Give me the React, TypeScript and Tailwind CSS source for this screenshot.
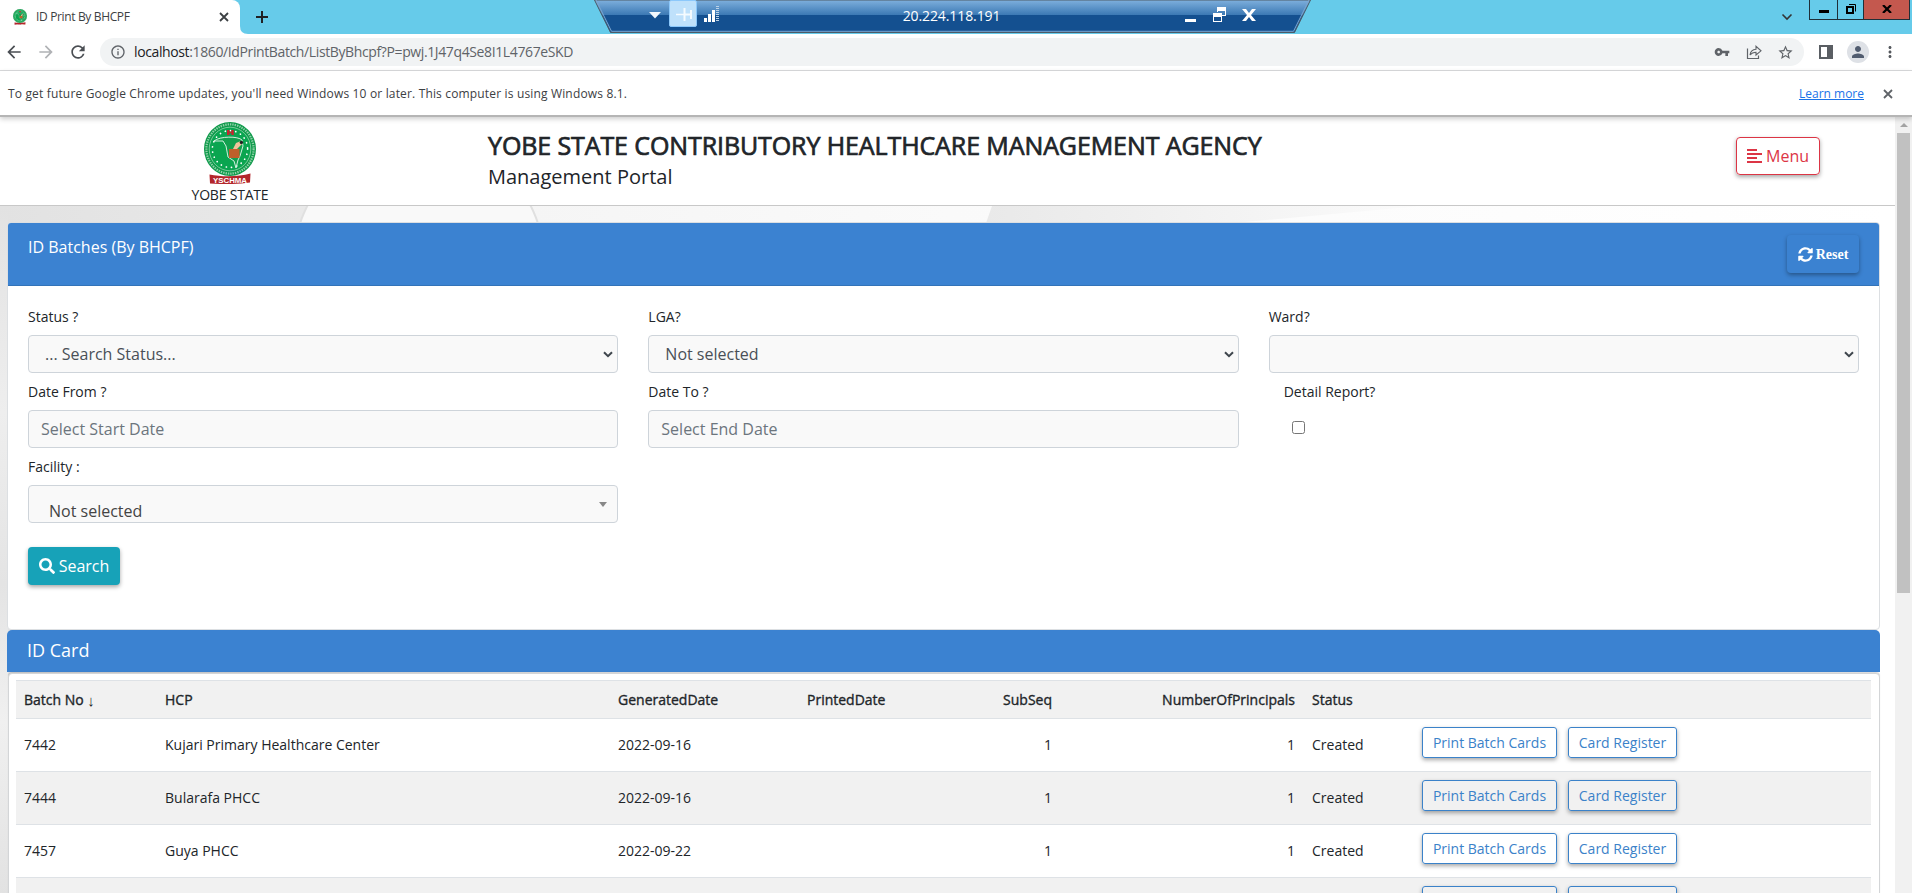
import type { ReactNode } from "react";
import { FaSearch, FaSyncAlt } from "react-icons/fa";
import { MdArrowBack, MdArrowForward, MdRefresh, MdInfoOutline, MdVpnKey, MdStarBorder, MdMoreVert, MdPerson } from "react-icons/md";

function Crest({ className }: { className?: string }) {
  return (
    <svg viewBox="0 0 52 62" preserveAspectRatio="none" className={className}>
      <ellipse cx="26" cy="27" rx="26" ry="27" fill="#0f9a4b" />
      <ellipse cx="26" cy="27" rx="23.6" ry="24.6" fill="none" stroke="#8fd1a8" strokeWidth="2.2" strokeDasharray="1.4 1" />
      <ellipse cx="26" cy="27" rx="20.8" ry="21.8" fill="#0aa550" stroke="#a5dcb9" strokeWidth="0.7" />
      <ellipse cx="26" cy="27" rx="17.6" ry="18.4" fill="none" stroke="#fff" strokeWidth="1.7" strokeLinecap="round" strokeDasharray="0.1 5.2" />
      <path d="M10 19 C16 14 34 14 38 18 L39 24 L36 34 L34 38 L32 46 L30 39 L24 35 L22 24 L19 19 Z" fill="#12a04f" stroke="#e8f7ee" strokeWidth="0.9" />
      <path d="M23 8h2.4v5H23zM27.4 8h2.4v5h-2.4zM25 9.7h3v1.6h-3z" fill="#c4262e" />
      <path d="M29 27 L32 21 L37 19 L38 22 L33 27 Z" fill="#f0c39b" />
      <circle cx="37.4" cy="20.4" r="1.7" fill="#222" />
      <rect x="25" y="27" width="10.5" height="9" fill="#c0602b" />
      <path d="M5.5 52.5 C18 55 34 55 46.5 51.5 L46 60.5 C34 62.4 18 62.4 6 61.5 Z" fill="#b3262b" />
      <text x="26" y="60.6" textAnchor="middle" fontFamily="Liberation Sans, sans-serif" fontWeight="700" fontSize="7.6" fill="#fff" textLength="34" lengthAdjust="spacingAndGlyphs">YSCHMA</text>
    </svg>
  );
}

function Cross({ className }: { className: string }) {
  return (
    <svg viewBox="0 0 10 10" className={className}>
      <path d="M1 1 L9 9 M9 1 L1 9" stroke="currentColor" strokeWidth="1.8" />
    </svg>
  );
}

function RemoteBar() {
  return (
    <div className="absolute left-[594px] top-0 h-[34px] w-[717px]">
      <svg viewBox="0 0 717 34" className="absolute inset-0 h-full w-full">
        <defs>
          <linearGradient id="rdp" x1="0" y1="0" x2="0" y2="1">
            <stop offset="0" stopColor="#7fb0dd" />
            <stop offset="0.45" stopColor="#3d7ab5" />
            <stop offset="0.46" stopColor="#145090" />
            <stop offset="1" stopColor="#145090" />
          </linearGradient>
        </defs>
        <path d="M0.5 0 L16.5 32.5 H700.5 L716.5 0 Z" fill="url(#rdp)" stroke="#4d5a66" />
        <path d="M2 0 L17.5 31.3 H699.5 L715 0" fill="none" stroke="#7da7d0" />
        <path d="M55 12 h12 l-6 6.5 z" fill="#f2f8fd" />
        <rect x="75.5" y="0.5" width="27" height="26" rx="1.5" fill="#bfe1fb" stroke="#8cc8fb" />
        <path d="M82 14.5 h8" stroke="#f5fbff" strokeWidth="1.5" fill="none" />
        <path d="M90.5 8 v13 M90.5 14.5 h7 M97 10 v9" stroke="#f5fbff" strokeWidth="2" fill="none" />
        <path d="M110 18h3v4h-3zM114 14h3v8h-3zM118 10h3v12h-3z" fill="#fff" />
        <path d="M123.5 6 v16" stroke="#bcd3e8" strokeWidth="3" strokeDasharray="1 1" />
        <path d="M591 19 h11 v3 h-11z" fill="#fff" />
        <path d="M623 7 h9 v9 h-4 v-1 h3 v-4 h-7 v1 h-1z M619 13 h9 v9 h-9z M620 17 v4 h7 v-4z" fill="#fff" fillRule="evenodd" />
        <path d="M648 9 h4 l3 4 l3 -4 h4 l-5 6 l5 6 h-4 l-3 -4 l-3 4 h-4 l5 -6z" fill="#fff" />
      </svg>
      <span className="absolute left-0 top-0 w-full pr-[2px] text-center text-[14px] leading-[32px] tracking-[-0.1px] text-white">20.224.118.191</span>
    </div>
  );
}

function TabStrip() {
  return (
    <div className="relative flex h-[34px] bg-[#66cbea]">
      <div className="flex h-full w-[240px] items-center rounded-tr-lg bg-white pr-[11px] pl-[13px]">
        <Crest className="h-4 w-3.5" />
        <span className="ml-[9px] flex-1 text-[12px] leading-4 tracking-[-0.35px] whitespace-nowrap text-[#3c4043]">ID Print By BHCPF</span>
        <Cross className="size-[10px] text-[#3c4043]" />
      </div>
      <svg viewBox="0 0 8 8" className="size-2 self-end">
        <path d="M0 0 Q0 8 8 8 H0Z" fill="#fff" />
      </svg>
      <svg viewBox="0 0 14 14" className="mt-[10px] ml-[7px] size-3.5">
        <path d="M7 1v12M1 7h12" stroke="#202124" strokeWidth="2" />
      </svg>
      <RemoteBar />
      <div className="ml-auto flex items-start">
        <svg viewBox="0 0 12 8" className="mt-[13px] mr-[16px] h-2 w-3">
          <path d="M1.5 1.5 L6 6 L10.5 1.5" stroke="#333" strokeWidth="1.6" fill="none" />
        </svg>
        <div className="mr-0.5 flex h-5 border border-t-0 border-[#1f2f38]">
          <div className="flex w-[28px] justify-center border-r border-[#1f2f38] pt-[10px]">
            <span className="h-[3px] w-[10px] bg-black" />
          </div>
          <div className="flex w-[26px] justify-center border-r border-[#1f2f38] pt-1">
            <svg viewBox="0 0 10 10" className="size-2.5">
              <path d="M3 0.5 H9.5 V7.5" stroke="#000" fill="none" />
              <rect x="1" y="3" width="6" height="6" fill="none" stroke="#000" strokeWidth="2" />
            </svg>
          </div>
          <div className="flex w-[45px] justify-center bg-[#c4584e] pt-[5px]">
            <svg viewBox="0 0 10 8" className="h-2 w-2.5">
              <path d="M1 0 L9 8 M9 0 L1 8" stroke="#000" strokeWidth="2.2" />
            </svg>
          </div>
        </div>
      </div>
    </div>
  );
}

function Toolbar() {
  return (
    <div className="flex h-[37px] items-center border-b border-[#dadbdd] bg-white pl-[4px]">
      <MdArrowBack className="size-5 text-[#4a4e53]" />
      <MdArrowForward className="ml-[12px] size-5 text-[#b0b2b5]" />
      <MdRefresh className="ml-[12px] size-5 text-[#4a4e53]" />
      <div className="ml-[12px] flex h-7 w-[1704px] items-center rounded-full bg-[#f1f3f4] pr-[10px] pl-[10px]">
        <MdInfoOutline className="size-4 text-[#5f6368]" />
        <span className="ml-2 flex-1 text-[14px] leading-5 tracking-[-0.38px] text-[#5f6368]">
          <span className="text-[#202124]">localhost</span>:1860/IdPrintBatch/ListByBhcpf?P=pwj.1J47q4Se8I1L4767eSKD
        </span>
        <MdVpnKey className="size-4 text-[#5f6368]" />
        <svg viewBox="0 0 16 16" className="ml-4 size-4">
          <path d="M1.5 4.5 V14.5 H12.5 V11.5" stroke="#5f6368" strokeWidth="1.2" fill="none" />
          <path d="M4 11 C4.5 7.5 7 5.5 10 5.3 V2.3 L15 6.8 L10 11 V8.2 C7.5 8.2 5.5 9 4 11 Z" stroke="#5f6368" strokeWidth="1.1" fill="none" />
        </svg>
        <MdStarBorder className="ml-[15px] size-[17px] text-[#5f6368]" />
      </div>
      <svg viewBox="0 0 14 14" className="ml-[15px] size-3.5">
        <path d="M0 0h14v14H0z M2 2v10h6V2z" fill="#5a5e63" fillRule="evenodd" />
      </svg>
      <div className="ml-[14px] flex size-[22px] items-center justify-center rounded-full bg-[#dee1e6]">
        <MdPerson className="size-[18px] text-[#515c6f]" />
      </div>
      <MdMoreVert className="ml-[12px] size-[18px] text-[#54585d]" />
    </div>
  );
}

function InfoBar() {
  return (
    <div className="relative z-10 flex h-[46px] items-center border-b-2 border-[#b5b5b5] bg-white pt-px pr-[19px] pl-2 text-[12px] leading-4 shadow-[0_2px_5px_rgba(0,0,0,0.2)]">
      <span className="flex-1 tracking-[0.16px] text-[#3c4043]">
        To get future Google Chrome updates, you'll need Windows 10 or later. This computer is using Windows 8.1.
      </span>
      <span className="mr-[19px] text-[#1a73e8] underline">Learn more</span>
      <Cross className="size-[10px] text-[#5f6368]" />
    </div>
  );
}

function SiteHeader() {
  return (
    <header className="flex h-[89px] items-start border-b border-[#c8c8c8] bg-white">
      <div className="flex w-[460px] flex-col items-center pt-[5px]">
        <Crest className="h-[62px] w-[52px]" />
        <span className="text-[14px] leading-[21px] tracking-[-0.2px]">YOBE STATE</span>
      </div>
      <div className="pt-[10px] pl-7">
        <h1 className="text-[25px] leading-9 font-normal tracking-[-0.1px] whitespace-nowrap [-webkit-text-stroke:0.7px_#212529]">YOBE STATE CONTRIBUTORY HEALTHCARE MANAGEMENT AGENCY</h1>
        <p className="text-[20px] leading-7">Management Portal</p>
      </div>
      <button className="mt-5 mr-[75px] ml-auto flex h-[38px] w-[84px] items-center justify-center gap-1 rounded border border-[#dc3545] text-[16px] text-[#dc3545] shadow-[0_2px_4px_rgba(0,0,0,0.35)]">
        <svg viewBox="0 0 15 14" className="h-3.5 w-[15px]">
          <path d="M0 0h10v2H0zM0 4h15v2H0zM0 8h10v2H0zM0 12h15v2H0z" fill="#dc3545" />
        </svg>
        Menu
      </button>
    </header>
  );
}

function Field({ label, children }: { label: string; children: ReactNode }) {
  return (
    <div className="h-[75px]">
      <div className="pt-px pb-2 text-[14px] leading-[21px]">{label}</div>
      {children}
    </div>
  );
}

function SelectBox({ value }: { value: string }) {
  return (
    <div className="flex h-[38px] items-center justify-between rounded border border-[#ced4da] bg-[#f9f9f9] pr-1 pl-4 text-[16px] text-[#495057]">
      <span>{value}</span>
      <svg viewBox="0 0 10 7" className="h-[7px] w-2.5">
        <path d="M1 1.2 L5 5.2 L9 1.2" stroke="#3f464d" strokeWidth="2" fill="none" />
      </svg>
    </div>
  );
}

function InputBox({ placeholder }: { placeholder: string }) {
  return <div className="flex h-[38px] items-center rounded border border-[#ced4da] bg-[#f9f9f9] px-3 text-[16px] text-[#6c757d]">{placeholder}</div>;
}

function FilterCard() {
  return (
    <section className="mr-[15px] ml-[7px] h-[408px] rounded border border-[#dcdfe2] bg-white">
      <div className="flex h-[63px] items-start justify-between rounded-t-[3px] border-b border-[#3373b8] bg-[#3b82d1] pr-5 pl-5 text-white">
        <span className="pt-3 text-[16px] leading-6">ID Batches (By BHCPF)</span>
        <button className="mt-[12px] flex h-[38px] w-[72px] items-center justify-center gap-[3px] rounded pt-px font-['Liberation_Serif',serif] text-[14px] font-bold shadow-[0_2px_4px_rgba(0,0,0,0.35)]">
          <FaSyncAlt className="size-[15px]" />
          Reset
        </button>
      </div>
      <div className="grid grid-cols-3 gap-x-[30px] pt-[19px] pr-5 pl-5">
        <Field label="Status ?">
          <SelectBox value="... Search Status..." />
        </Field>
        <Field label="LGA?">
          <SelectBox value="Not selected" />
        </Field>
        <Field label="Ward?">
          <SelectBox value="" />
        </Field>
        <Field label="Date From ?">
          <InputBox placeholder="Select Start Date" />
        </Field>
        <Field label="Date To ?">
          <InputBox placeholder="Select End Date" />
        </Field>
        <div className="pl-[15px]">
          <Field label="Detail Report?">
            <div className="mt-[11px] ml-2 size-[13px] rounded-[2.5px] border border-[#767676] bg-white" />
          </Field>
        </div>
        <Field label="Facility :">
          <div className="flex h-[38px] justify-between overflow-hidden rounded border border-[#ced4da] bg-[#f9f9f9] pr-[10px] pl-5 text-[16px] text-[#444]">
            <span className="pt-[13px] leading-6">Not selected</span>
            <svg viewBox="0 0 8 5" className="mt-4 h-[5px] w-2">
              <path d="M0 0h8L4 5z" fill="#888" />
            </svg>
          </div>
        </Field>
      </div>
      <button className="mt-[17px] ml-5 flex h-[38px] w-[92px] items-center justify-center gap-[4px] rounded bg-[#17a2b8] text-[16px] text-white shadow-[0_2px_4px_rgba(0,0,0,0.35)]">
        <FaSearch className="size-4" />
        Search
      </button>
    </section>
  );
}

const rows = [
  { no: "7442", hcp: "Kujari Primary Healthcare Center", date: "2022-09-16" },
  { no: "7444", hcp: "Bularafa PHCC", date: "2022-09-16" },
  { no: "7457", hcp: "Guya PHCC", date: "2022-09-22" },
  { no: "", hcp: "", date: "" },
];

const columns = "grid grid-cols-[141px_453px_189px_174px_71px_243px_118px_1fr] pl-2";

function RowButton({ width, children }: { width: string; children: ReactNode }) {
  return (
    <button className={`${width} h-[31px] rounded-[3px] border border-[#3b82c9] text-[14px] leading-[21px] whitespace-nowrap text-[#3b82c9] shadow-[0_2px_4px_rgba(0,0,0,0.35)]`}>
      {children}
    </button>
  );
}

function ResultCard() {
  return (
    <section className="mr-[15px]">
      <div className="ml-[7px] h-[42px] rounded-t-[5px] bg-[#3b82d1] pl-5 text-[18px] leading-[41px] text-white">ID Card</div>
      <div className="mt-px ml-2 h-[300px] rounded-t border border-[#d3d5d7] bg-white pt-[6px] pr-2 pl-[7px] text-[14px] shadow-[0_-1px_1px_rgba(0,0,0,0.15)]">
        <div className={`${columns} h-[38px] border-t border-[#dee2e6] bg-[#f1f1f1] leading-[38px] [-webkit-text-stroke:0.35px_#212529]`}>
          <span>
            Batch No <span className="inline-block h-[38px] translate-y-px align-top font-['Liberation_Sans',sans-serif] text-[15px] [-webkit-text-stroke:0]">↓</span>
          </span>
          <span>HCP</span>
          <span>GeneratedDate</span>
          <span>PrintedDate</span>
          <span className="text-right">SubSeq</span>
          <span className="text-right">NumberOfPrincipals</span>
          <span className="pl-[17px]">Status</span>
        </div>
        {rows.map((r, i) => (
          <div key={i} className={`${columns} h-[53px] border-t border-[#dee2e6] leading-[51px] ${i % 2 ? "bg-[#f1f1f1]" : "bg-white"}`}>
            <span>{r.no}</span>
            <span>{r.hcp}</span>
            <span>{r.date}</span>
            <span />
            <span className="text-right">{r.no && "1"}</span>
            <span className="text-right">{r.no && "1"}</span>
            <span className="pl-[17px]">{r.no && "Created"}</span>
            <div className="flex items-start gap-[11px] pt-2 pl-[9px]">
              <RowButton width="w-[135px]">{r.no && "Print Batch Cards"}</RowButton>
              <RowButton width="w-[109px]">{r.no && "Card Register"}</RowButton>
            </div>
          </div>
        ))}
      </div>
    </section>
  );
}

function Backdrop() {
  return (
    <svg viewBox="0 0 1895 688" className="absolute top-[89px] left-0 h-[688px] w-[1895px]">
      <defs>
        <linearGradient id="wall" x1="0" x2="1" y1="0" y2="0">
          <stop offset="0" stopColor="#e2e2e2" />
          <stop offset="0.16" stopColor="#e9e9e9" />
          <stop offset="0.2" stopColor="#eeeeee" />
          <stop offset="0.28" stopColor="#f5f5f5" />
          <stop offset="0.5" stopColor="#fafafa" />
          <stop offset="1" stopColor="#ffffff" />
        </linearGradient>
        <linearGradient id="beam" x1="0" x2="1" y1="0" y2="0">
          <stop offset="0" stopColor="#e9e9e9" />
          <stop offset="0.4" stopColor="#f0f0f0" />
          <stop offset="1" stopColor="#fbfbfb" />
        </linearGradient>
        <linearGradient id="edge" x1="0" x2="0" y1="0" y2="1">
          <stop offset="0" stopColor="#e2e2e2" />
          <stop offset="0.3" stopColor="#eeeeee" />
          <stop offset="0.55" stopColor="#e4e4e4" />
          <stop offset="0.75" stopColor="#f0f0f0" />
          <stop offset="1" stopColor="#e2e2e2" />
        </linearGradient>
      </defs>
      <rect width="1895" height="688" fill="url(#wall)" />
      <rect width="8" height="688" fill="url(#edge)" />
      <ellipse cx="419" cy="60" rx="126" ry="130" fill="#f9f9f9" stroke="#e0e0e0" strokeWidth="2" />
      <path d="M992 0 L985 20 L1200 20 L1420 0 Z" fill="url(#beam)" />
      <rect x="1880" width="15" height="688" fill="#fff" />
    </svg>
  );
}

function Scrollbar() {
  return (
    <div className="flex w-[17px] flex-col items-center bg-[#f1f1f1] pt-[6px]">
      <svg viewBox="0 0 8 4" className="h-1 w-2">
        <path d="M0 4h8L4 0z" fill="#a3a3a3" />
      </svg>
      <div className="mt-[6px] h-[460px] w-[13px] bg-[#c1c1c1]" />
    </div>
  );
}

export default function App() {
  return (
    <div className="flex h-[893px] w-[1912px] flex-col overflow-hidden bg-white font-['Open_Sans',sans-serif] text-[#212529]">
      <TabStrip />
      <Toolbar />
      <InfoBar />
      <div className="flex min-h-0 flex-1">
        <main className="relative w-[1895px] overflow-hidden">
          <Backdrop />
          <div className="relative">
            <SiteHeader />
            <div className="h-4" />
            <FilterCard />
            <ResultCard />
          </div>
        </main>
        <Scrollbar />
      </div>
    </div>
  );
}
